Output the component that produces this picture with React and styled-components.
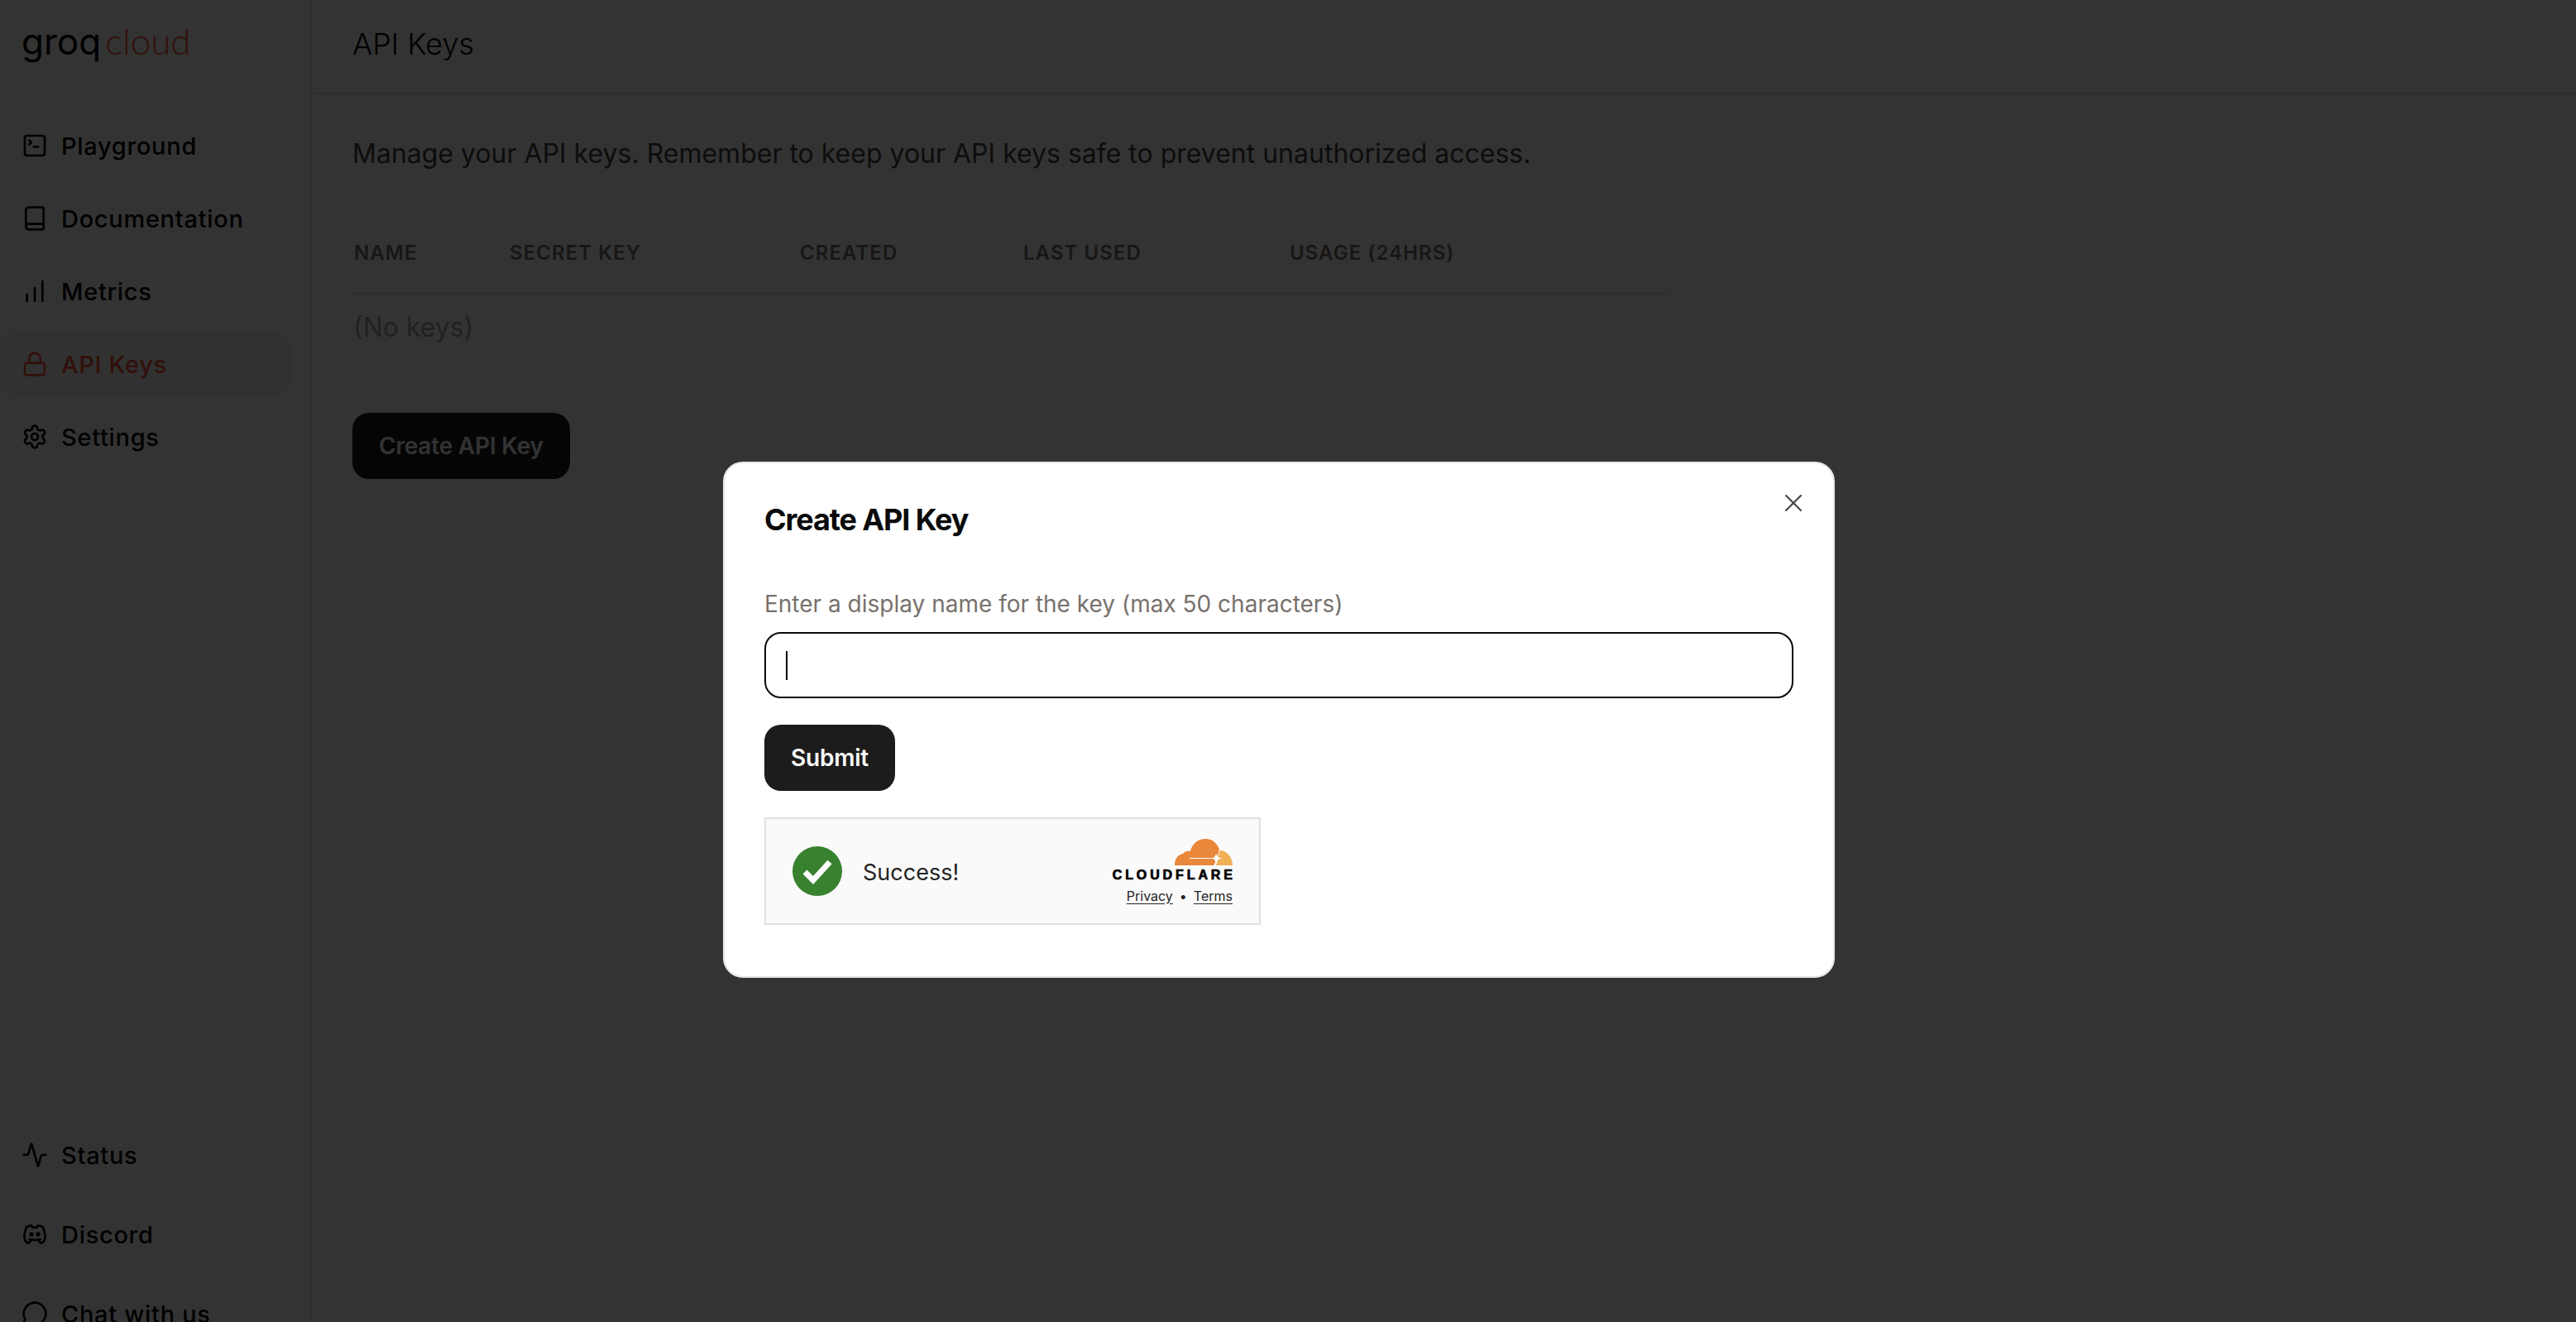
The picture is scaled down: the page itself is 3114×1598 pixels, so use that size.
import React from "react";
import styled, { createGlobalStyle } from "styled-components";
import {
  Activity,
  Book,
  ChartNoAxesColumnIncreasing,
  Lock,
  MessageCircle,
  Settings,
  SquareTerminal,
  X,
} from "lucide-react";
import { TbBrandDiscord } from "react-icons/tb";

const GlobalStyle = createGlobalStyle`
  html, body {
    margin: 0;
    height: 100%;
    overflow: hidden;
    background: #fff;
    font-family: Inter, "Liberation Sans", sans-serif;
    color: #1c1917;
  }
`;

const Page = styled.div`
  display: grid;
  grid-template-columns: 378px 1fr;
  height: 100vh;
  overflow: hidden;
`;

const Sidebar = styled.aside`
  display: flex;
  flex-direction: column;
  height: calc(100vh + 30px);
  border-right: 2px solid #e7e5e4;
  box-sizing: border-box;
  padding: 0 24px 0 2px;
`;

const Logo = styled.div`
  display: flex;
  align-items: baseline;
  height: 136px;
  box-sizing: border-box;
  padding: 22px 0 0 24px;
  font-size: 44px;
  line-height: 54px;
`;

const LogoGroq = styled.span`
  font-family: Inter, sans-serif;
  font-weight: 400;
  color: #000;
`;

const LogoCloud = styled.span`
  font-family: Lato, sans-serif;
  font-weight: 300;
  color: #f55036;
  margin-left: 5px;
`;

const NavGroup = styled.nav`
  display: flex;
  flex-direction: column;
  gap: ${(props) => props.$gap}px;
  margin-top: ${(props) => (props.$bottom ? "auto" : "0")};
`;

const NavItem = styled.a`
  display: flex;
  align-items: center;
  gap: 16px;
  height: 80px;
  padding-left: 24px;
  border-radius: 24px;
  font-size: 29px;
  font-weight: 500;
  letter-spacing: 0.7px;
  color: ${(props) => (props.$active ? "#f55036" : "#000")};
  background: ${(props) => (props.$active ? "#f5f5f4" : "transparent")};

  svg {
    flex: none;
    width: 32px;
    height: 32px;
  }
`;

const Main = styled.main`
  display: flex;
  flex-direction: column;
`;

const Header = styled.header`
  display: flex;
  align-items: center;
  height: 114px;
  box-sizing: border-box;
  padding: 0 0 6px 48px;
  border-bottom: 2px solid #e7e5e4;
  font-size: 36px;
  font-weight: 300;
  color: #000;
`;

const Content = styled.section`
  padding: 50px 0 0 48px;
`;

const Intro = styled.p`
  margin: 0;
  font-size: 32px;
  line-height: 44px;
  color: #44403c;
`;

const KeyTable = styled.div`
  width: 1592px;
  margin-top: 82px;
`;

const HeadRow = styled.div`
  display: grid;
  grid-template-columns: 188px 351px 270px 322px 1fr;
  height: 64px;
  padding-left: 2px;
  border-bottom: 2px solid #e7e5e4;
  font-size: 24px;
  font-weight: 600;
  line-height: 32px;
  letter-spacing: 1.05px;
  color: #78716c;
`;

const EmptyRow = styled.div`
  padding: 20px 0 0 1px;
  font-size: 32px;
  line-height: 40px;
  color: #a8a29e;
`;

const ActionButton = styled.button`
  display: block;
  height: 80px;
  padding: 0 32px;
  border: 0;
  border-radius: 20px;
  background: #1c1c1c;
  color: #fafaf9;
  font-family: inherit;
  font-size: 28px;
  font-weight: 600;
  letter-spacing: -0.2px;
  margin-top: ${(props) => props.$top}px;
`;

const Overlay = styled.div`
  position: fixed;
  inset: 0;
  background: rgba(0, 0, 0, 0.8);
`;

const Dialog = styled.div`
  position: absolute;
  left: 874px;
  top: 558px;
  width: 1344px;
  height: 624px;
  box-sizing: border-box;
  padding: 48px;
  background: #fff;
  border: 2px solid #e7e5e4;
  border-radius: 24px;
`;

const CloseButton = styled.span`
  position: absolute;
  top: 30px;
  right: 30px;
  display: flex;
  color: #444;
`;

const DialogTitle = styled.h2`
  margin: 0;
  font-size: 36px;
  font-weight: 700;
  line-height: 40px;
  letter-spacing: -1.1px;
  color: #0a0a0a;
`;

const FieldLabel = styled.label`
  display: block;
  margin-top: 62px;
  font-size: 28px;
  line-height: 40px;
  color: #78716c;
`;

const NameField = styled.div`
  display: flex;
  align-items: center;
  height: 80px;
  box-sizing: border-box;
  margin-top: 14px;
  padding-left: 24px;
  border: 2px solid #0c0a09;
  border-radius: 20px;
`;

const Caret = styled.span`
  width: 2px;
  height: 35px;
  background: #000;
`;

const Widget = styled.div`
  display: flex;
  align-items: center;
  justify-content: space-between;
  width: 600px;
  height: 130px;
  box-sizing: border-box;
  margin-top: 32px;
  padding: 0 32px;
  background: #fafafa;
  border: 2px solid #e0e0e0;
`;

const WidgetStatus = styled.div`
  display: flex;
  align-items: center;
  gap: 25px;
  font-size: 27px;
  line-height: 32px;
  color: #232323;

  span {
    padding-top: 3px;
  }
`;

const Brand = styled.div`
  display: flex;
  flex-direction: column;
  align-items: flex-end;
`;

const BrandName = styled.span`
  margin-top: 4px;
  font-family: "Liberation Sans", sans-serif;
  font-size: 16px;
  font-weight: 700;
  line-height: 16px;
  letter-spacing: 3.9px;
  margin-right: -3.9px;
  -webkit-text-stroke: 0.7px #000;
  color: #000;
`;

const BrandLinks = styled.div`
  display: flex;
  gap: 8px;
  margin-top: 7px;
  font-size: 16px;
  line-height: 20px;
  color: #232323;

  a {
    text-decoration: underline;
    text-underline-offset: 3px;
  }
`;

const navTop = [
  { label: "Playground", Icon: SquareTerminal },
  { label: "Documentation", Icon: Book },
  { label: "Metrics", Icon: ChartNoAxesColumnIncreasing },
  { label: "API Keys", Icon: Lock, active: true },
  { label: "Settings", Icon: Settings },
];

const navBottom = [
  { label: "Status", Icon: Activity },
  { label: "Discord", Icon: TbBrandDiscord },
  { label: "Chat with us", Icon: MessageCircle },
];

const columns = ["Name", "Secret key", "Created", "Last used", "Usage (24hrs)"];

const SuccessIcon = () => (
  <svg width="60" height="60" viewBox="0 0 60 60">
    <circle cx="30" cy="30" r="30" fill="#38812f" />
    <polyline points="15,31 25,41 45,19" fill="none" stroke="#fff" strokeWidth="7" />
  </svg>
);

const CloudLogo = () => (
  <svg width="70" height="32" viewBox="0 0 70 32">
    <path
      d="M0 32C0 24 4 19 10 18C12 15 15 14 19 15C21 6 28 0 37 0C46 0 52 6 54 13L51 22L50 27L47 32Z"
      fill="#e9873a"
    />
    <path d="M52 24C53 18 54 15 55 14C62 14 70 21 70 32H50C51 29 52 27 52 24Z" fill="#f2b055" />
    <path d="M18 23H45C48 23 49 21 50 18C51 21 52 23 58 23.500C52 24 51 26 50 30C49 26 48 24 45 24H18Z" fill="#fff" />
  </svg>
);

const renderItems = (items) =>
  items.map(({ label, Icon, active }) => (
    <NavItem key={label} $active={active}>
      <Icon />
      {label}
    </NavItem>
  ));

const App = () => {
  return (
    <>
      <GlobalStyle />
      <Page>
        <Sidebar>
          <Logo>
            <LogoGroq>groq</LogoGroq>
            <LogoCloud>cloud</LogoCloud>
          </Logo>
          <NavGroup $gap={8}>{renderItems(navTop)}</NavGroup>
          <NavGroup $gap={16} $bottom>
            {renderItems(navBottom)}
          </NavGroup>
        </Sidebar>
        <Main>
          <Header>API Keys</Header>
          <Content>
            <Intro>
              Manage your API keys. Remember to keep your API keys safe to prevent
              unauthorized access.
            </Intro>
            <KeyTable>
              <HeadRow>
                {columns.map((column) => (
                  <span key={column}>{column.toUpperCase()}</span>
                ))}
              </HeadRow>
              <EmptyRow>(No keys)</EmptyRow>
            </KeyTable>
            <ActionButton $top={83}>Create API Key</ActionButton>
          </Content>
        </Main>
      </Page>
      <Overlay>
        <Dialog>
          <CloseButton>
            <X size={36} strokeWidth={1.4} />
          </CloseButton>
          <DialogTitle>Create API Key</DialogTitle>
          <FieldLabel>Enter a display name for the key (max 50 characters)</FieldLabel>
          <NameField>
            <Caret />
          </NameField>
          <ActionButton $top={32}>Submit</ActionButton>
          <Widget>
            <WidgetStatus>
              <SuccessIcon />
              <span>Success!</span>
            </WidgetStatus>
            <Brand>
              <CloudLogo />
              <BrandName>CLOUDFLARE</BrandName>
              <BrandLinks>
                <a>Privacy</a>
                <span>•</span>
                <a>Terms</a>
              </BrandLinks>
            </Brand>
          </Widget>
        </Dialog>
      </Overlay>
    </>
  );
};

export default App;
